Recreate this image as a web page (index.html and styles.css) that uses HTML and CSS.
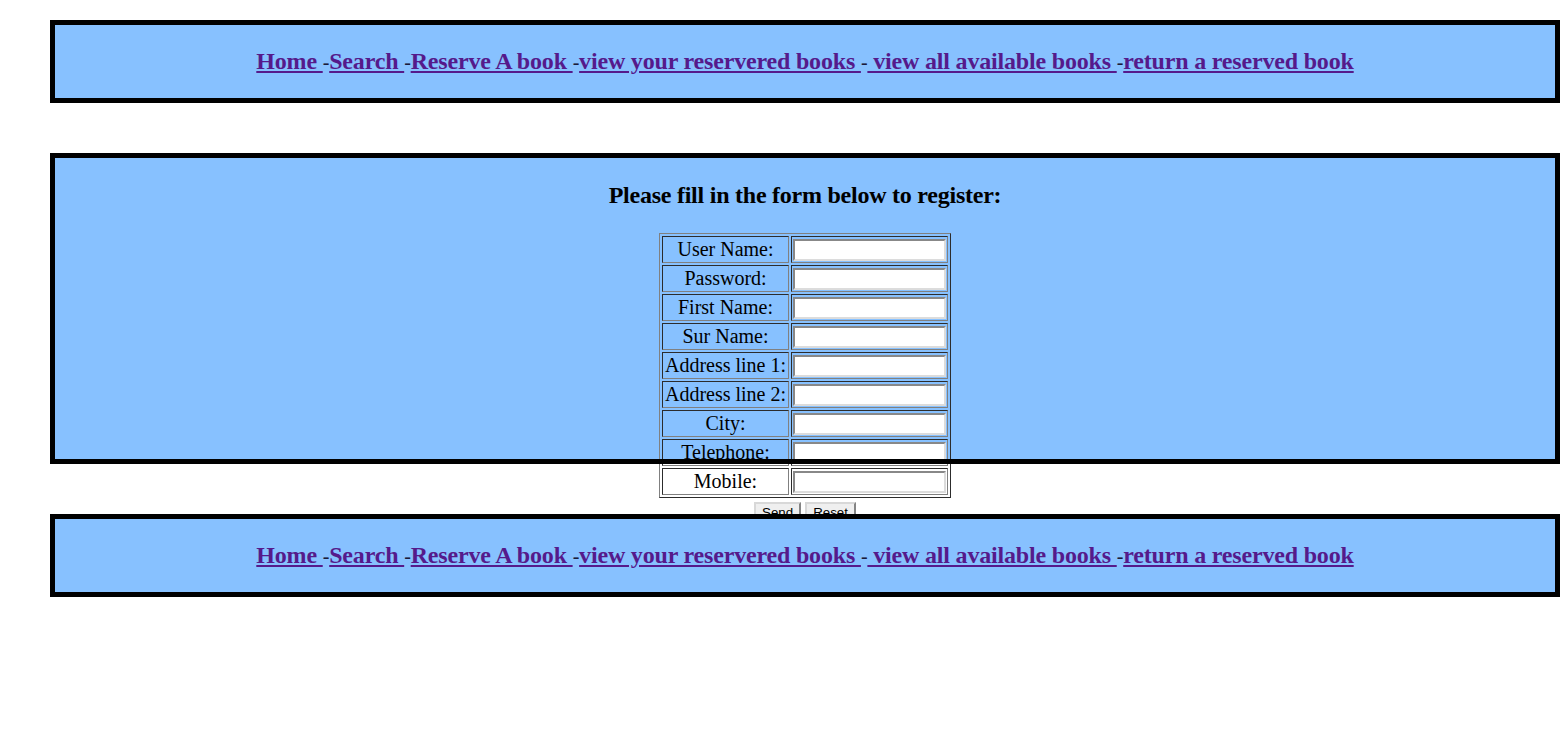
FILE: index.html
```html
<!DOCTYPE html>
<html>
<head>
<meta charset="utf-8">
<title>Register</title>
<link rel="stylesheet" href="styles.css">
</head>
<body>
<div class="page">
  <div class="box nav"><p class="links"><a href="#">Home </a><span class="sep">-</span><a href="#">Search </a><span class="sep">-</span><a href="#">Reserve A book </a><span class="sep">-</span><a href="#">view your reservered books </a><span class="sep">-</span><a href="#"> view all available books </a><span class="sep">-</span><a href="#">return a reserved book</a></p></div>

  <div class="box form-box">
    <h3 class="title">Please fill in the form below to register:</h3>
    <form class="reg">
      <table class="grid">
        <tr><td class="label">User Name:</td><td class="field"><input type="text"></td></tr>
        <tr><td class="label">Password:</td><td class="field"><input type="password"></td></tr>
        <tr><td class="label">First Name:</td><td class="field"><input type="text"></td></tr>
        <tr><td class="label">Sur Name:</td><td class="field"><input type="text"></td></tr>
        <tr><td class="label">Address line 1:</td><td class="field"><input type="text"></td></tr>
        <tr><td class="label">Address line 2:</td><td class="field"><input type="text"></td></tr>
        <tr><td class="label">City:</td><td class="field"><input type="text"></td></tr>
        <tr><td class="label">Telephone:</td><td class="field"><input type="text"></td></tr>
        <tr><td class="label">Mobile:</td><td class="field"><input type="text"></td></tr>
      </table>
      <div class="buttons"><button type="submit">Send</button> <button type="reset">Reset</button></div>
    </form>
  </div>

  <div class="box nav bottom"><p class="links"><a href="#">Home </a><span class="sep">-</span><a href="#">Search </a><span class="sep">-</span><a href="#">Reserve A book </a><span class="sep">-</span><a href="#">view your reservered books </a><span class="sep">-</span><a href="#"> view all available books </a><span class="sep">-</span><a href="#">return a reserved book</a></p></div>
</div>
</body>
</html>
```

FILE: styles.css
```css
body {
  margin: 0;
  font-family: "Liberation Serif", "Times New Roman", serif;
  font-size: 16px;
  color: #000;
  background: #fff;
}

.page {
  padding: 20px 0 0 50px;
}

.box {
  width: 1500px;
  border: 5px solid #000;
  background: #87c1ff;
  margin-bottom: 50px;
}

.nav {
  height: 73px;
  display: flex;
  align-items: center;
  justify-content: center;
}

.bottom {
  position: relative;
  z-index: 2;
}

.links {
  margin: 0;
  font-size: 24px;
  font-weight: bold;
  letter-spacing: -0.18px;
  white-space: pre;
}

.links a {
  color: #551a8b;
  text-decoration: underline;
}

.links .sep {
  font-size: 20px;
  font-weight: normal;
  color: #1a1a3a;
}

.form-box {
  height: 301px;
  position: relative;
  text-align: center;
}

.form-box::after {
  content: "";
  position: absolute;
  top: -5px;
  left: -5px;
  right: -5px;
  bottom: -5px;
  border: 5px solid #000;
  pointer-events: none;
  z-index: 1;
}

.title {
  margin: 24px 0;
  font-size: 24px;
  font-weight: bold;
  letter-spacing: -0.24px;
}

.grid {
  margin: 0 auto;
  border: 1px outset #808080;
  border-spacing: 2px;
  font-size: 20px;
}

.grid td {
  border: 1px inset #808080;
  padding: 1px;
  text-align: center;
  line-height: 23px;
}

.grid .label {
  white-space: nowrap;
  padding: 1px 2px;
}

.field input {
  display: block;
  box-sizing: border-box;
  width: 153px;
  height: 22px;
  margin: 0;
  border: 2px inset #dcdcdc;
  background: #fff;
  padding: 1px 2px;
  font-family: "Liberation Sans", Arial, sans-serif;
  font-size: 13.33px;
}

.buttons {
  margin-top: 4px;
  font-size: 16px;
}

.buttons button {
  font-family: "Liberation Sans", Arial, sans-serif;
  font-size: 13.33px;
  padding: 1px 6px;
  border: 2px outset #d8d8d8;
  background: #efefef;
  color: #000;
  height: 21px;
}
```
